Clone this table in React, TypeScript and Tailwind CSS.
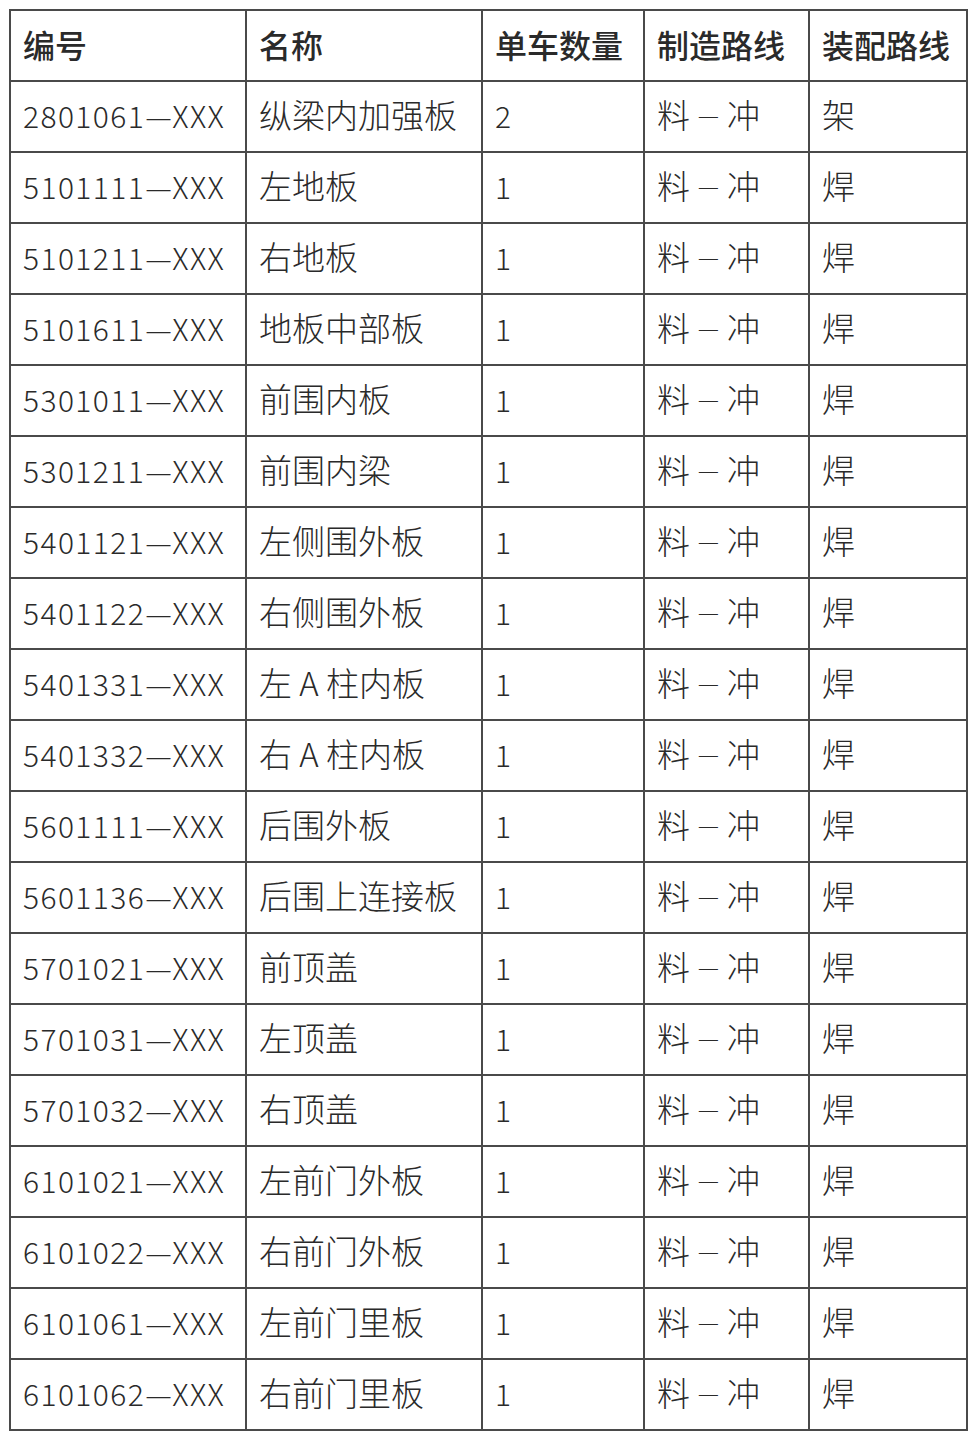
import React from "react";

const rows: [string, string, string, string][] = [
  ["2801061—XXX", "纵梁内加强板", "2", "架"],
  ["5101111—XXX", "左地板", "1", "焊"],
  ["5101211—XXX", "右地板", "1", "焊"],
  ["5101611—XXX", "地板中部板", "1", "焊"],
  ["5301011—XXX", "前围内板", "1", "焊"],
  ["5301211—XXX", "前围内梁", "1", "焊"],
  ["5401121—XXX", "左侧围外板", "1", "焊"],
  ["5401122—XXX", "右侧围外板", "1", "焊"],
  ["5401331—XXX", "左 A 柱内板", "1", "焊"],
  ["5401332—XXX", "右 A 柱内板", "1", "焊"],
  ["5601111—XXX", "后围外板", "1", "焊"],
  ["5601136—XXX", "后围上连接板", "1", "焊"],
  ["5701021—XXX", "前顶盖", "1", "焊"],
  ["5701031—XXX", "左顶盖", "1", "焊"],
  ["5701032—XXX", "右顶盖", "1", "焊"],
  ["6101021—XXX", "左前门外板", "1", "焊"],
  ["6101022—XXX", "右前门外板", "1", "焊"],
  ["6101061—XXX", "左前门里板", "1", "焊"],
  ["6101062—XXX", "右前门里板", "1", "焊"],
];

const font = { fontFamily: '"Noto Sans CJK SC", "Noto Sans", sans-serif' };

export default function App() {
  return (
    <div className="w-[975px] h-[1435px] bg-white pt-[9px] pl-[9px]" style={font}>
      <table className="border-collapse table-fixed w-[957px] text-[#2a2a2a]">
        <colgroup>
          <col className="w-[236px]" />
          <col className="w-[236px]" />
          <col className="w-[162px]" />
          <col className="w-[165px]" />
          <col className="w-[158px]" />
        </colgroup>
        <thead>
          <tr className="h-[71px]">
            {["编号", "名称", "单车数量", "制造路线", "装配路线"].map((h) => (
              <th
                key={h}
                className="border-2 border-[#4a4a4a] text-left font-medium text-[32px] leading-none pl-[12px] pr-0 pb-[4px] whitespace-nowrap"
              >
                {h}
              </th>
            ))}
          </tr>
        </thead>
        <tbody className="font-light">
          {rows.map((r) => (
            <tr key={r[0]} className="h-[71px]">
              <td className="border-2 border-[#4a4a4a] text-[30px] leading-none pl-[12px] pb-[4px] whitespace-nowrap tracking-[1.4px]">{r[0]}</td>
              <td className="border-2 border-[#4a4a4a] text-[33px] leading-none pl-[12px] pb-[4px] whitespace-nowrap">{r[1]}</td>
              <td className="border-2 border-[#4a4a4a] text-[30px] leading-none pl-[12px] pb-[4px]">{r[2]}</td>
              <td className="border-2 border-[#4a4a4a] text-[33px] leading-none pl-[12px] pb-[4px] whitespace-nowrap">
                料
                <span className="inline-block w-[37px] text-center">
                  <span className="relative -top-[4px] text-[24px]">—</span>
                </span>
                冲
              </td>
              <td className="border-2 border-[#4a4a4a] text-[33px] leading-none pl-[12px] pb-[4px]">{r[3]}</td>
            </tr>
          ))}
        </tbody>
      </table>
    </div>
  );
}
